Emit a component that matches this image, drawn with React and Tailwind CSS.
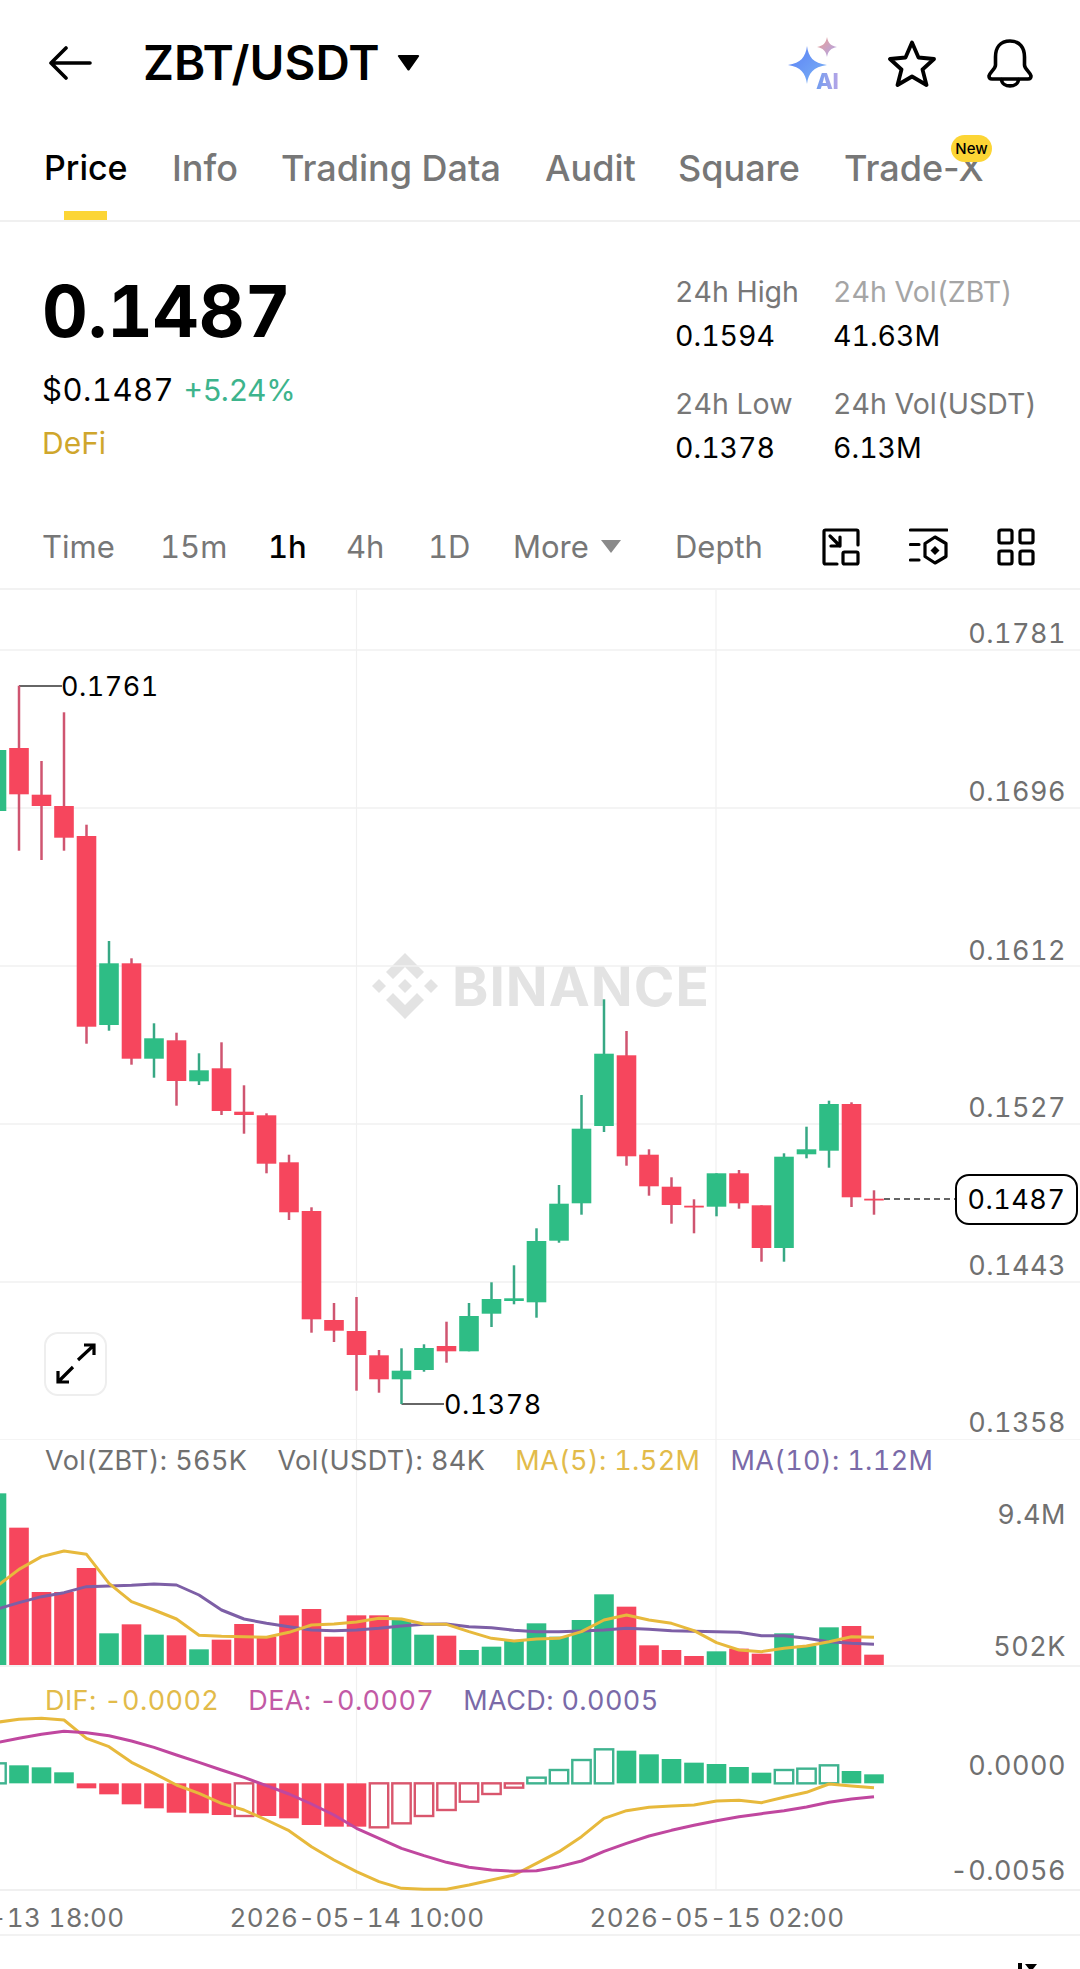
import React from 'react';

const RED = '#f6465d';
const GREEN = '#2ebd85';

// [high, bodyTop, bodyBottom, low, colour], page px, first one hangs off the left edge
const candles = [
  [750, 750, 811, 811, 'g'],
  [685.7, 748, 794.3, 850.7, 'r'],
  [761, 794.7, 806, 860, 'r'],
  [712.3, 806, 837.7, 850.7, 'r'],
  [824.7, 836, 1026.7, 1043.7, 'r'],
  [941, 963.3, 1025, 1030.7, 'g'],
  [958.3, 963.3, 1058.7, 1064.7, 'r'],
  [1023.3, 1038.3, 1058.7, 1077.7, 'g'],
  [1032.7, 1040.3, 1081, 1105.7, 'r'],
  [1053.3, 1070.3, 1081.3, 1085, 'g'],
  [1042.3, 1068.3, 1111, 1115, 'r'],
  [1085.3, 1111.7, 1115, 1133.7, 'r'],
  [1113.3, 1115.3, 1163.7, 1173.3, 'r'],
  [1154.7, 1162.3, 1212.3, 1220, 'r'],
  [1207.3, 1211, 1319.3, 1332.7, 'r'],
  [1303, 1320, 1330.7, 1342, 'r'],
  [1297, 1331, 1355, 1390.7, 'r'],
  [1350, 1355.3, 1379.3, 1392.7, 'r'],
  [1348.3, 1370.7, 1379.3, 1404, 'g'],
  [1344.3, 1348, 1370, 1371.7, 'g'],
  [1321.7, 1346, 1351.3, 1362.7, 'r'],
  [1303, 1316, 1351.3, 1351.3, 'g'],
  [1282.3, 1299, 1313.7, 1327, 'g'],
  [1265.3, 1298.3, 1301, 1304.3, 'g'],
  [1228.3, 1241, 1302.3, 1317.7, 'g'],
  [1185, 1203.7, 1240.7, 1242.7, 'g'],
  [1095, 1128.7, 1203.3, 1214.7, 'g'],
  [999.3, 1053.7, 1126, 1132, 'g'],
  [1031, 1055.3, 1156.3, 1165.7, 'r'],
  [1149.3, 1154.7, 1186.3, 1195.7, 'r'],
  [1177.3, 1186.7, 1205, 1223.7, 'r'],
  [1199.3, 1205.7, 1207.3, 1233.3, 'r'],
  [1173.3, 1173.3, 1206.7, 1216.3, 'g'],
  [1170, 1173.3, 1203.3, 1208.7, 'r'],
  [1205.3, 1205.3, 1248, 1261.7, 'r'],
  [1153.3, 1156.7, 1248, 1261.7, 'g'],
  [1126.7, 1149.3, 1154.3, 1158.3, 'g'],
  [1100.7, 1104, 1150.7, 1167.7, 'g'],
  [1102.3, 1104, 1197.3, 1207, 'r'],
  [1190.3, 1198.7, 1199.7, 1214.7, 'r'],
];

// sub charts are read off 3x crops, so these are in thirds of a px from the pane top
const volTops = [160, 263, 456, 456, 384, 580, 553, 584, 586, 628, 599, 552, 590, 526, 507, 590, 526, 526, 540, 584, 587, 630, 620, 600, 550, 590, 540, 463, 500, 616, 630, 648, 634, 626, 641, 580, 617, 562, 558, 644];
const ma5 = [440, 388, 350, 333, 343, 430, 485, 510, 537, 586, 589, 590, 592, 577, 555, 552, 546, 535, 537, 552, 553, 575, 595, 603, 597, 595, 575, 540, 525, 540, 550, 572, 608, 630, 635, 625, 618, 605, 590, 592];
const ma10 = [508, 488, 470, 458, 440, 438, 436, 432, 435, 465, 510, 537, 550, 560, 570, 572, 570, 565, 558, 553, 552, 560, 563, 571, 575, 575, 573, 570, 565, 568, 572, 574, 575, 577, 587, 587, 595, 605, 610, 613];

// macd pane starts 7 px under the crop these came from
const MACD_OFFSET = 7;
const macdBars = [
  [310, 1], [316, 0], [322, 0], [337, 0], [385, 0], [403, 0], [433, 0], [445, 0], [458, 0], [460, 0],
  [465, 0], [468, 1], [468, 0], [475, 0], [495, 0], [500, 0], [500, 0], [502, 1], [490, 1], [468, 1],
  [450, 1], [425, 1], [402, 1], [383, 1], [353, 1], [330, 1], [300, 1], [268, 1], [272, 0], [283, 0],
  [297, 0], [308, 0], [312, 0], [321, 0], [338, 0], [330, 1], [326, 1], [316, 1], [333, 0], [343, 0],
];
const dif = [187, 178, 175, 180, 235, 260, 307, 340, 375, 400, 430, 450, 480, 512, 560, 600, 635, 665, 685, 688, 688, 675, 660, 645, 610, 575, 530, 475, 452, 442, 438, 435, 423, 421, 428, 412, 397, 372, 378, 383];
const dea = [248, 235, 223, 214, 218, 227, 243, 262, 285, 307, 330, 352, 377, 402, 432, 465, 505, 535, 565, 587, 607, 622, 630, 634, 632, 620, 603, 574, 550, 528, 511, 496, 482, 470, 461, 452, 441, 427, 417, 410];

const xAt = (i) => -3.5 + 22.5 * i;
const linePoints = (values, offset = 0) => values.map((v, i) => `${xAt(i)},${v / 3 - offset}`).join(' ');

const fontSans = 'font-["Inter","Noto_Sans",sans-serif]';

function BackArrow() {
  return (
    <svg width="43" height="34" viewBox="0 0 43 34" fill="none" stroke="#000" strokeWidth="3.6" strokeLinecap="round" strokeLinejoin="round">
      <path d="M41 17H3M17 2L2 17L17 32" />
    </svg>
  );
}

function AiIcon() {
  return (
    <div className="relative w-[54px] h-[52px]">
      <svg width="54" height="52" viewBox="0 0 54 52">
        <defs>
          <linearGradient id="bigStar" x1="0" y1="0" x2="1" y2="1">
            <stop offset="0" stopColor="#5b7ff5" />
            <stop offset="1" stopColor="#7ab4f5" />
          </linearGradient>
          <linearGradient id="smallStar" x1="0" y1="0" x2="1" y2="1">
            <stop offset="0" stopColor="#f0a08f" />
            <stop offset="1" stopColor="#a9a4f0" />
          </linearGradient>
        </defs>
        <path d="M19 9C20.5 20 25 26 39 28C25 30 20.5 36 19 47C17.5 36 13 30 0 28C13 26 17.5 20 19 9Z" fill="url(#bigStar)" />
        <path d="M39 0C40 6 43 9 49 10C43 11 40 14 39 20C38 14 35 11 29 10C35 9 38 6 39 0Z" fill="url(#smallStar)" />
      </svg>
      <span className={`absolute left-[28px] top-[33px] text-[22px] leading-[22px] font-extrabold tracking-[-0.5px] text-transparent bg-clip-text bg-linear-to-r from-[#6f9cf0] to-[#b3a4e6] ${fontSans}`}>AI</span>
    </div>
  );
}

function StarIcon() {
  return (
    <svg width="48" height="47" viewBox="0 0 48 47" fill="none" stroke="#000" strokeWidth="3.8" strokeLinejoin="round">
      <path d="M24 2.5L30.5 17.5L46 19L34.5 29.5L38.5 45L24 36.5L9.5 45L13.5 29.5L2 19L17.5 17.5Z" />
    </svg>
  );
}

function BellIcon() {
  return (
    <svg width="46" height="49" viewBox="0 0 46 49" fill="none" stroke="#000" strokeWidth="3.6" strokeLinejoin="round" strokeLinecap="round">
      <path d="M23 2C13 2 8.5 9 8.5 18V26C8.5 30 3 33 2 37C2 39 3 40 5 40H41C43 40 44 39 44 37C43 33 37.5 30 37.5 26V18C37.5 9 33 2 23 2Z" />
      <path d="M14.5 40.5C15 49 31 49 31.5 40.5" />
    </svg>
  );
}

function SwapIcon() {
  return (
    <svg width="38" height="38" viewBox="0 0 38 38" fill="none" stroke="#000" strokeWidth="3.2" strokeLinecap="round" strokeLinejoin="round">
      <path d="M36 17V3.5C36 2.5 35.5 2 34.5 2H3.5C2.5 2 2 2.5 2 3.5V34.5C2 35.5 2.5 36 3.5 36H15" />
      <rect x="21" y="24" width="15" height="12" rx="1.5" />
      <path d="M8 8L18 18M18 9V18H9" />
    </svg>
  );
}

function DepthIcon() {
  return (
    <svg width="39" height="37" viewBox="0 0 39 37" fill="none" stroke="#000" strokeWidth="3.2" strokeLinecap="round" strokeLinejoin="round">
      <path d="M1.5 2H38M1.5 16.5H10M1.5 32H10" />
      <path d="M26 9L37 15.5V28.5L26 35L16 28.5V15.5Z" />
      <path d="M26 18L30.5 22.5L26 27L21.5 22.5Z" fill="#000" stroke="none" />
    </svg>
  );
}

function GridIcon() {
  return (
    <svg width="38" height="38" viewBox="0 0 38 38" fill="none" stroke="#000" strokeWidth="3.2">
      <rect x="2" y="2" width="13" height="13" rx="2" />
      <rect x="23" y="2" width="13" height="13" rx="2" />
      <rect x="2" y="23" width="13" height="13" rx="2" />
      <rect x="23" y="23" width="13" height="13" rx="2" />
    </svg>
  );
}

function Header() {
  return (
    <div className="flex items-center h-[126px] pl-[49px] pr-[47px]">
      <BackArrow />
      <span className="ml-[51px] text-[47.5px] leading-[52px] font-semibold text-black">ZBT/USDT</span>
      <svg className="ml-[17px]" width="23" height="16" viewBox="0 0 23 16">
        <path d="M1 1.5C0.5 0.8 1 0 2 0H21C22 0 22.5 0.8 22 1.5L12.5 15C12 15.8 11 15.8 10.5 15Z" fill="#000" />
      </svg>
      <div className="ml-auto flex items-center">
        <AiIcon />
        <div className="ml-[46px]"><StarIcon /></div>
        <div className="ml-[51px]"><BellIcon /></div>
      </div>
    </div>
  );
}

function Tabs() {
  return (
    <div className="relative flex h-[96px] pl-[44px] pt-[23px] border-b-2 border-[#f0f0f0] text-[36px] leading-[38px] font-medium text-[#777777]">
      <div className="relative w-[128px] h-[71px] text-[34px] text-black">
        Price
        <div className="absolute left-[20px] bottom-0 w-[43px] h-[9px] bg-[#fcd535]" />
      </div>
      <div className="w-[109px]">Info</div>
      <div className="w-[264px]">Trading Data</div>
      <div className="w-[133px]">Audit</div>
      <div className="w-[166px]">Square</div>
      <div className="relative">
        Trade-X
        <span className="absolute left-[107px] top-[-14px] flex items-center justify-center w-[41px] h-[27px] rounded-full bg-[#fcd535] text-[15px] leading-[15px] font-medium text-black">New</span>
      </div>
    </div>
  );
}

function Summary() {
  return (
    <div className="flex h-[288px] tabular-nums">
      <div className="pl-[42px] pt-[53px]">
        <div className="text-[71px] leading-[72px] font-bold text-black">0.1487</div>
        <div className="mt-[25px] flex gap-[9px] leading-[36px]">
          <span className="text-[31px] tracking-[0.5px] text-black">$0.1487</span>
          <span className="text-[30px] [font-variant-numeric:normal] text-[#3db48c]">+5.24%</span>
        </div>
        <div className="mt-[17px] text-[30px] leading-[36px] text-[#cfa62c]">DeFi</div>
      </div>
      <div className="ml-auto w-[405px] pt-[52px] grid grid-cols-[158px_247px] content-start gap-y-[8px] text-[28.5px] leading-[36px] text-black">
        <div className="text-[#777777]">24h High</div>
        <div className="text-[#a5a5a5]">24h Vol(ZBT)</div>
        <div>0.1594</div>
        <div>41.63M</div>
        <div className="mt-[24px] text-[#777777]">24h Low</div>
        <div className="mt-[24px] text-[#777777]">24h Vol(USDT)</div>
        <div>0.1378</div>
        <div>6.13M</div>
      </div>
    </div>
  );
}

function Intervals() {
  return (
    <div className="flex items-center h-[80px] pb-[5px] pl-[42px] border-b-2 border-[#f2f2f2] text-[31px] leading-[36px] tabular-nums text-[#777777]">
      <div className="w-[118px]">Time</div>
      <div className="w-[108px]">15m</div>
      <div className="w-[78px] text-black font-medium">1h</div>
      <div className="w-[82px]">4h</div>
      <div className="w-[85px]">1D</div>
      <div className="w-[162px] flex items-center gap-[12px]">
        More
        <svg width="20" height="13" viewBox="0 0 20 13"><path d="M0 0H20L10 13Z" fill="#8a8a8a" /></svg>
      </div>
      <div className="w-[147px]">Depth</div>
      <div className="w-[87px]"><SwapIcon /></div>
      <div className="w-[88px]"><DepthIcon /></div>
      <GridIcon />
    </div>
  );
}

function AxisLabel({ className, children }) {
  return <div className={`absolute right-[14px] text-[27px] leading-[32px] tracking-[0.5px] tabular-nums text-[#707070] ${className}`}>{children}</div>;
}

function MainPane() {
  return (
    <div className="relative h-[850px]">
      <div className="absolute left-[372px] top-[363px] flex items-center gap-[14px]">
        <svg width="66" height="66" viewBox="0 0 66 66" fill="#e3e3e3">
          <path d="M33 0L52 19L45 26L33 14L21 26L14 19Z" />
          <path d="M33 66L52 47L45 40L33 52L21 40L14 47Z" />
          <path d="M0 33L7 26L14 33L7 40Z" />
          <path d="M66 33L59 26L52 33L59 40Z" />
          <path d="M33 26L40 33L33 40L26 33Z" />
        </svg>
        <span className="text-[55px] leading-[60px] font-bold tracking-[1px] text-[#e3e3e3]">BINANCE</span>
      </div>
      <svg className="relative block" width="1080" height="850" viewBox="0 590 1080 850">
        {[650, 808, 966, 1124, 1282, 1440].map((y) => (
          <line key={y} x1="0" x2="1080" y1={y} y2={y} stroke="#f0f0f0" strokeWidth="1.5" />
        ))}
        <line x1="356.5" x2="356.5" y1="590" y2="1440" stroke="#f0f0f0" strokeWidth="1.2" />
        <line x1="716" x2="716" y1="590" y2="1440" stroke="#f0f0f0" strokeWidth="1.2" />
        <path d="M19 686H62" stroke="#333" strokeWidth="1.5" />
        <path d="M401.5 1404H444" stroke="#333" strokeWidth="1.5" />
        <path d="M884 1199H955" stroke="#333" strokeWidth="1.5" strokeDasharray="6 4" />
        {candles.map(([high, top, bottom, low, c], i) => (
          <g key={i}>
            <line x1={xAt(i)} x2={xAt(i)} y1={high} y2={low} stroke={c === 'r' ? '#cf5570' : '#37a884'} strokeWidth="2.5" />
            <rect x={xAt(i) - 9.8} y={top} width="19.6" height={Math.max(bottom - top, 1.8)} fill={c === 'r' ? RED : GREEN} />
          </g>
        ))}
      </svg>
      <div className="absolute left-[61px] top-[81px] text-[27px] leading-[32px] tracking-[0.5px] tabular-nums text-black">0.1761</div>
      <div className="absolute left-[444px] top-[799px] text-[27px] leading-[32px] tracking-[0.5px] tabular-nums text-black">0.1378</div>
      <AxisLabel className="top-[28px]">0.1781</AxisLabel>
      <AxisLabel className="top-[186px]">0.1696</AxisLabel>
      <AxisLabel className="top-[345px]">0.1612</AxisLabel>
      <AxisLabel className="top-[502px]">0.1527</AxisLabel>
      <AxisLabel className="top-[660px]">0.1443</AxisLabel>
      <AxisLabel className="top-[817px]">0.1358</AxisLabel>
      <div className="absolute left-[955px] top-[584px] flex items-center justify-center w-[123px] h-[51px] rounded-[14px] border-2 border-black bg-white text-[27px] leading-[32px] tracking-[0.5px] tabular-nums text-black">0.1487</div>
      <div className="absolute left-[44px] top-[742px] w-[63px] h-[64px] rounded-[14px] border-2 border-[#eeeeee] bg-white">
        <svg width="59" height="60" viewBox="0 0 59 60" fill="none" stroke="#000" strokeWidth="3.2">
          <path d="M32 26L47 12M38 11H48V21" />
          <path d="M27 33L13 47M12 37V48H23" />
        </svg>
      </div>
    </div>
  );
}

function VolumePane() {
  return (
    <div className="relative h-[225px] border-b-2 border-[#f2f2f2] box-content">
      <svg className="block" width="1080" height="225" viewBox="0 0 1080 225">
        <line x1="356.5" x2="356.5" y1="0" y2="225" stroke="#f0f0f0" strokeWidth="1.2" />
        <line x1="716" x2="716" y1="0" y2="225" stroke="#f0f0f0" strokeWidth="1.2" />
        {volTops.map((t, i) => (
          <rect key={i} x={xAt(i) - 9.8} y={t / 3} width="19.6" height={225 - t / 3} fill={candles[i][4] === 'r' ? RED : GREEN} />
        ))}
        <polyline points={linePoints(ma10)} fill="none" stroke="#7d5fa6" strokeWidth="3" strokeLinejoin="round" />
        <polyline points={linePoints(ma5)} fill="none" stroke="#e7b93c" strokeWidth="3" strokeLinejoin="round" />
      </svg>
      <div className="absolute left-[45px] top-[5px] flex gap-[30px] text-[27px] leading-[32px] tracking-[0.4px] tabular-nums text-[#707070]">
        <span>Vol(ZBT): 565K</span>
        <span>Vol(USDT): 84K</span>
        <span className="text-[#e2bb4a]">MA(5): 1.52M</span>
        <span className="text-[#7a6aa8]">MA(10): 1.12M</span>
      </div>
      <AxisLabel className="top-[59px]">9.4M</AxisLabel>
      <AxisLabel className="top-[191px]">502K</AxisLabel>
    </div>
  );
}

function MacdPane() {
  const zero = 370 / 3 - MACD_OFFSET;
  return (
    <div className="relative h-[222px] border-b-2 border-[#f0f0f0] box-content">
      <svg className="block overflow-visible" width="1080" height="222" viewBox="0 0 1080 222">
        <line x1="356.5" x2="356.5" y1="0" y2="222" stroke="#f0f0f0" strokeWidth="1.2" />
        <line x1="716" x2="716" y1="0" y2="222" stroke="#f0f0f0" strokeWidth="1.2" />
        {macdBars.map(([t, hollow], i) => {
          const y = t / 3 - MACD_OFFSET;
          const top = Math.min(y, zero);
          const h = Math.abs(y - zero);
          const c = y < zero ? GREEN : RED;
          if (hollow) {
            return <rect key={i} x={xAt(i) - 9.2} y={top} width="18.4" height={h} fill="#fff" stroke={y < zero ? '#3fb38f' : '#d9566d'} strokeWidth="2.4" />;
          }
          return <rect key={i} x={xAt(i) - 9.8} y={top} width="19.6" height={h} fill={c} />;
        })}
        <polyline points={linePoints(dif, MACD_OFFSET)} fill="none" stroke="#e7b93c" strokeWidth="3" strokeLinejoin="round" />
        <polyline points={linePoints(dea, MACD_OFFSET)} fill="none" stroke="#c0479f" strokeWidth="3" strokeLinejoin="round" />
      </svg>
      <div className="absolute left-[45px] top-[18px] flex gap-[29px] text-[27px] leading-[32px] tracking-[0.4px] tabular-nums">
        <span className="text-[#e2bb4a]">DIF: -0.0002</span>
        <span className="text-[#c25aa5]">DEA: -0.0007</span>
        <span className="text-[#7a6aa8]">MACD: 0.0005</span>
      </div>
      <AxisLabel className="top-[83px]">0.0000</AxisLabel>
      <AxisLabel className="top-[188px]">-0.0056</AxisLabel>
    </div>
  );
}

function DateAxis() {
  return (
    <div className="flex items-center h-[45px] pt-[10px] overflow-hidden border-b-2 border-[#f2f2f2] text-[26px] leading-[32px] tracking-[0.3px] tabular-nums text-[#707070]">
      <div className="shrink-0 w-[360px] ml-[-183px] text-center">2026-05-13 18:00</div>
      <div className="shrink-0 w-[360px] text-center">2026-05-14 10:00</div>
      <div className="shrink-0 w-[360px] text-center">2026-05-15 02:00</div>
    </div>
  );
}

// only the top of the next row's filter icon shows at the bottom edge
function BottomEdge() {
  return (
    <div className="flex justify-end h-[33px] pt-[27px] pr-[43px]">
      <svg width="19" height="6" viewBox="0 0 19 6" fill="#000">
        <rect x="0" y="0" width="4" height="6" />
        <path d="M7 1H19L15 6H11Z" />
      </svg>
    </div>
  );
}

export default function App() {
  return (
    <div className={`w-[1080px] h-[1969px] overflow-hidden bg-white ${fontSans}`}>
      <Header />
      <Tabs />
      <Summary />
      <Intervals />
      <MainPane />
      <VolumePane />
      <MacdPane />
      <DateAxis />
      <BottomEdge />
    </div>
  );
}
